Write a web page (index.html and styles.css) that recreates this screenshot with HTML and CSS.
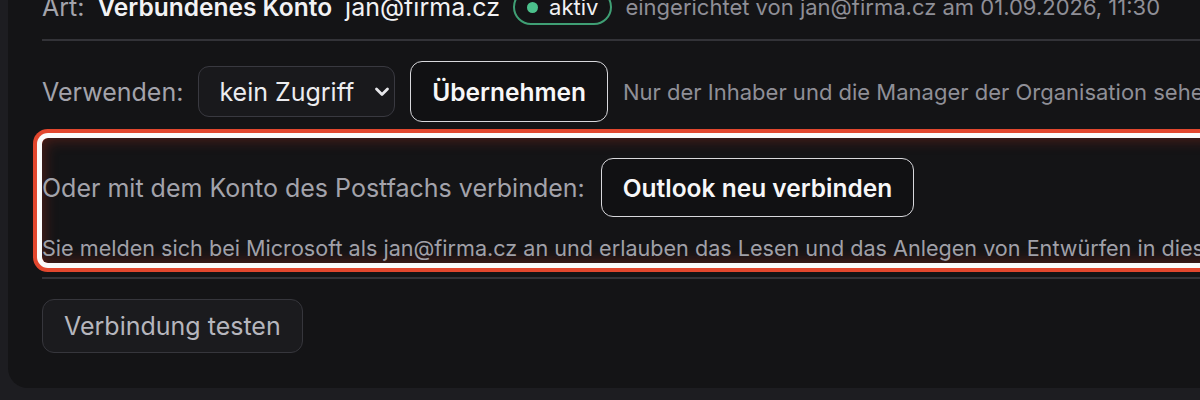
FILE: index.html
```html
<!DOCTYPE html>
<html lang="de">
<head>
<meta charset="utf-8">
<title>Postfach</title>
<link rel="stylesheet" href="styles.css">
</head>
<body>
<div class="page">
  <section class="card">
    <div class="row meta">
      <span class="label">Art:</span>
      <strong class="value">Verbundenes Konto</strong>
      <span class="value">jan@firma.cz</span>
      <span class="badge"><span class="dot"></span>aktiv</span>
      <span class="hint">eingerichtet von jan@firma.cz am 01.09.2026, 11:30</span>
    </div>
    <hr class="divider">
    <div class="row use">
      <span class="label">Verwenden:</span>
      <div class="select">
        <span>kein Zugriff</span>
        <svg class="chev" width="16" height="10" viewBox="0 0 16 10"><path d="M2.5 2l5.5 5.5 5.5-5.5" fill="none" stroke="#e6e6ea" stroke-width="2.8" stroke-linecap="round" stroke-linejoin="round"/></svg>
      </div>
      <button class="btn primary">Übernehmen</button>
      <span class="hint">Nur der Inhaber und die Manager der Organisation sehen den Inhalt des Postfachs.</span>
    </div>
    <div class="focus">
      <div class="row connect">
        <span class="label">Oder mit dem Konto des Postfachs verbinden:</span>
        <button class="btn primary wide">Outlook neu verbinden</button>
      </div>
      <p class="note">Sie melden sich bei Microsoft als jan@firma.cz an und erlauben das Lesen und das Anlegen von Entwürfen in diesem Postfach.</p>
    </div>
    <hr class="divider lower">
    <div class="row test">
      <button class="btn ghost">Verbindung testen</button>
    </div>
  </section>
</div>
</body>
</html>
```
FILE: styles.css
```css
html, body {
  margin: 0;
  padding: 0;
  background: #1d1d21;
  overflow: hidden;
  height: 400px;
}
.page {
  padding-left: 8px;
  font-family: Inter, "Noto Sans", sans-serif;
}
.card {
  width: 1300px;
  margin-top: -40px;
  background: #141416;
  border-radius: 0 0 0 20px;
  padding: 29px 0 35px 34px;
  box-sizing: border-box;
}
.row {
  display: flex;
  align-items: center;
  white-space: nowrap;
}
.label {
  color: #a3a3ab;
  font-size: 25px;
}
.meta {
  height: 36px;
  gap: 13px;
}
.value {
  color: #f2f2f4;
  font-size: 25px;
}
strong.value {
  font-weight: 600;
  font-size: 24.5px;
}
.badge {
  display: inline-flex;
  align-items: center;
  gap: 11px;
  height: 36px;
  padding: 0 12px;
  box-sizing: border-box;
  border: 2px solid #3f9f74;
  border-radius: 18px;
  color: #f0f0f2;
  font-size: 22px;
}
.dot {
  width: 11px;
  height: 11px;
  border-radius: 50%;
  background: #4cc18c;
}
.hint {
  color: #8f8f97;
  font-size: 22px;
}
.divider {
  border: 0;
  border-top: 2px solid #333338;
  margin: 14px 0 0 0;
  height: 0;
}
.use {
  margin-top: 20px;
  gap: 15px;
}
.select {
  display: flex;
  align-items: center;
  gap: 20px;
  height: 51px;
  padding: 0 4px 0 20px;
  box-sizing: border-box;
  border: 1px solid #393940;
  border-radius: 11px;
  background: #19191c;
  color: #ececef;
  font-size: 25px;
}
.chev { display: block; }
.btn {
  font-family: inherit;
  cursor: pointer;
}
.primary {
  height: 61px;
  padding: 0 21px;
  background: #111113;
  border: 1.5px solid #d8d8dc;
  border-radius: 12px;
  color: #f7f7f8;
  font-size: 24.5px;
  font-weight: 600;
}
.primary.wide {
  height: 59px;
}
.focus {
  margin-top: 16px;
  padding: 20px 0 0 0;
  height: 125px;
  box-sizing: border-box;
  border-radius: 6px;
  box-shadow: 0 0 0 5px #fbfbfb, 0 0 0 9px #e2472e, inset 0 0 14px 2px rgba(190, 50, 30, 0.35);
}
.connect {
  gap: 16px;
}
.note {
  margin: 18px 0 0 0;
  color: #a0a0a8;
  font-size: 21.6px;
  white-space: nowrap;
}
.divider.lower {
  margin-top: 14px;
}
.test {
  margin-top: 20px;
}
.ghost {
  height: 54px;
  padding: 0 21px;
  background: #1b1b1e;
  border: 1px solid #36363c;
  border-radius: 12px;
  color: #b6b6bd;
  font-size: 25px;
  font-weight: 400;
}
```
